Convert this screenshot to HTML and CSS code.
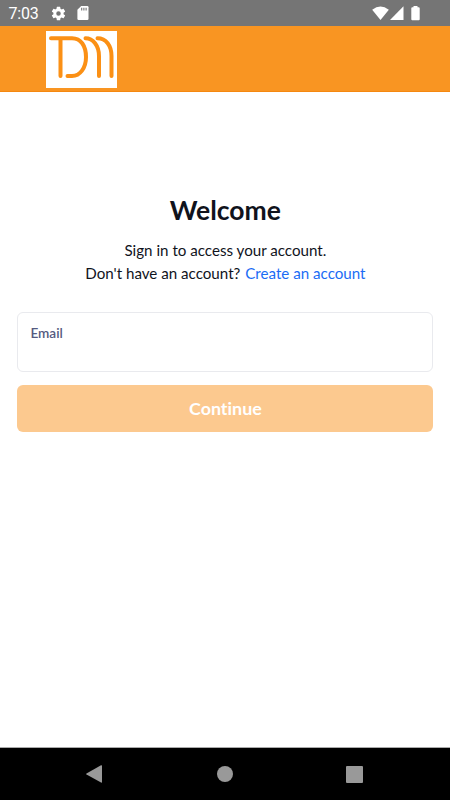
FILE: index.html
```html
<!DOCTYPE html>
<html lang="en">
<head>
    <meta charset="UTF-8">
    <meta name="viewport" content="width=device-width, initial-scale=1.0">
    <title>Sign in</title>
    <link rel="stylesheet" href="styles.css">
</head>
<body>
    <!-- Status bar -->
    <div class="status-bar">
        <span class="time">7:03</span>
        <svg class="gear" width="17" height="17" viewBox="0 0 24 24" fill="#fff"><path d="M19.14 12.94c.04-.3.06-.61.06-.94s-.02-.64-.07-.94l2.03-1.58a.49.49 0 0 0 .12-.61l-1.92-3.32a.49.49 0 0 0-.59-.22l-2.39.96a7 7 0 0 0-1.62-.94l-.36-2.54A.48.48 0 0 0 13.92 2.4h-3.84a.48.48 0 0 0-.48.41l-.36 2.54c-.59.24-1.13.57-1.62.94l-2.39-.96a.49.49 0 0 0-.59.22L2.72 8.87a.48.48 0 0 0 .12.61l2.03 1.58a6 6 0 0 0 0 1.88l-2.03 1.58a.49.49 0 0 0-.12.61l1.92 3.32c.12.22.37.29.59.22l2.39-.96c.5.38 1.03.7 1.62.94l.36 2.54c.05.24.24.41.48.41h3.84c.24 0 .44-.17.47-.41l.36-2.54c.59-.24 1.13-.56 1.62-.94l2.39.96c.22.08.47 0 .59-.22l1.92-3.32a.48.48 0 0 0-.12-.61zM12 15.2a3.2 3.2 0 1 1 0-6.4 3.2 3.2 0 0 1 0 6.4z"/></svg>
        <svg class="card" width="12" height="14" viewBox="0 0 12 14"><path fill="#fff" d="M4.2 0H10.3Q11.5 0 11.5 1.2V12.8Q11.5 14 10.3 14H1.6Q.4 14 .4 12.8V3.8z"/><path stroke="#757575" stroke-width="1.1" d="M4.7 1.7V4.4M6.9 1.7V4.4M9.1 1.7V4.4"/></svg>
        <div class="signals">
            <svg width="17" height="15" viewBox="0 0 17 15" fill="#fff"><path d="M.2 3.8Q8.5-3 16.8 3.8L8.5 14z"/></svg>
            <svg width="14" height="15" viewBox="0 0 14 15" fill="#fff"><path d="M13.5.3V14H0z"/></svg>
            <svg class="battery" width="9" height="15" viewBox="0 0 9 15" fill="#fff"><path d="M2.5 0h4v1.3h1.2Q8.7 1.3 8.7 2.3V13.2Q8.7 14.2 7.7 14.2H1.3Q.3 14.2 .3 13.2V2.3Q.3 1.3 1.3 1.3H2.5z"/></svg>
        </div>
    </div>

    <!-- App header -->
    <header class="header">
        <svg class="logo" width="71" height="57" viewBox="0 0 71 57">
            <rect width="71" height="57" fill="#fff"/>
            <path class="logo-line" d="M5 7.2H26C35 7.2 40 15 40 26S34 45 26 45H21.5M14.5 7.2V45M39.5 7.2C47 7.2 53 14.5 53 25V45M51.5 7.2C60 7.2 65.5 14.5 65.5 25V45"/>
        </svg>
    </header>

    <main class="content">
        <h1 class="title">Welcome</h1>
        <p class="text">Sign in to access your account.</p>
        <p class="text">Don't have an account? <a class="link" href="#">Create an account</a></p>
        <form class="form">
            <label class="field">
                <span class="label">Email</span>
                <input class="input" type="email">
            </label>
            <button class="btn" type="submit" disabled>Continue</button>
        </form>
    </main>

    <!-- Navigation bar -->
    <nav class="nav-bar">
        <svg width="16" height="18" viewBox="0 0 16 18" fill="#999"><path d="M15 .3Q16 0 16 1V17Q16 18 15 17.6L.5 9.6Q-.2 9 .5 8.4z"/></svg>
        <svg width="18" height="16" viewBox="0 0 18 16" fill="#999"><circle cx="10" cy="8" r="8"/></svg>
        <svg width="17" height="17" viewBox="0 0 17 17" fill="#999"><rect width="17" height="17" rx="1"/></svg>
    </nav>
</body>
</html>
```
FILE: styles.css
```css
* {
    box-sizing: border-box;
}

body {
    display: flex;
    flex-direction: column;
    height: 100vh;
    margin: 0;
    font-family: Lato, "Liberation Sans", sans-serif;
    font-variant-ligatures: none;
    background-color: #fff;
    color: #10131c;
}

/* Status bar */
.status-bar {
    display: flex;
    align-items: center;
    height: 26px;
    padding: 0 30px 0 8.5px;
    background-color: #757575;
    color: #fff;
}

.time {
    width: 41.5px;
    font: 16px/26px Roboto, sans-serif;
    letter-spacing: -0.2px;
    padding-top: 2px;
}

.card {
    margin-left: 10px;
}

.signals {
    display: flex;
    gap: 1px;
    margin-left: auto;
}

.battery {
    margin-left: 6px;
}

/* Header */
.header {
    height: 66px;
    padding: 5px 46px;
    background-color: #f99522;
    border-bottom: 1px solid #f58810;
}

.logo {
    display: block;
}

.logo-line {
    fill: none;
    stroke: #fb9015;
    stroke-width: 4;
    stroke-linecap: round;
}

/* Sign in */
.content {
    flex: 1;
    padding: 101px 16.6px 0 17.4px;
    text-align: center;
}

.title {
    margin: 0 0 12px;
    font-size: 26.5px;
    line-height: 34px;
}

.text {
    margin: 0;
    font-size: 15.15px;
    line-height: 23px;
}

.link {
    margin-left: 1px;
    color: #1a6cf5;
    text-decoration: none;
}

.form {
    margin-top: 27px;
}

.field {
    display: block;
    height: 60px;
    padding: 11px 12px;
    border: 1px solid #e9eaee;
    border-radius: 6px;
    text-align: left;
}

.label {
    display: block;
    color: #555b80;
    font-size: 13.6px;
    font-weight: 600;
    line-height: 18px;
}

.input {
    display: block;
    width: 100%;
    height: 22px;
    padding: 0;
    border: none;
    outline: none;
    background: none;
    font: inherit;
}

.btn {
    display: block;
    width: 100%;
    height: 47px;
    margin-top: 13px;
    padding: 0;
    border: none;
    border-radius: 6px;
    background-color: #fcc98f;
    color: #fff;
    font: bold 17.9px/47px Lato, sans-serif;
    font-variant-ligatures: none;
}

/* Navigation bar */
.nav-bar {
    display: flex;
    align-items: center;
    justify-content: space-between;
    height: 53px;
    padding: 0 87px 0 86px;
    border-top: 1px solid #aaa;
    background-color: #000;
}
```
